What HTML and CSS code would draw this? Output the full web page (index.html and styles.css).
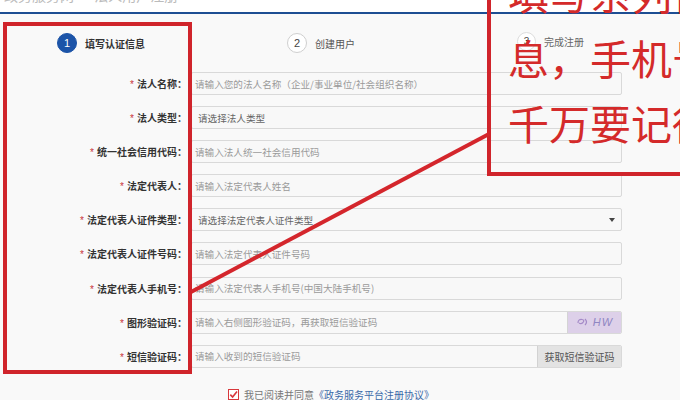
FILE: index.html
```html
<!DOCTYPE html>
<html lang="zh-CN">
<head>
<meta charset="utf-8">
<title>法人注册</title>
<link rel="stylesheet" href="styles.css">
</head>
<body>
<div class="page">
  <div class="topbar"><span class="title">政务服务网 · 法人用户注册</span></div>
  <div class="steps">
    <div class="step active"><span class="num">1</span><span class="txt">填写认证信息</span></div>
    <div class="step"><span class="num">2</span><span class="txt">创建用户</span></div>
    <div class="step last"><span class="num">3</span><span class="txt">完成注册</span></div>
  </div>
  <div class="form">
    <div class="lbl"><i>*</i>法人名称：</div>
    <div class="field"><span class="ph">请输入您的法人名称（企业/事业单位/社会组织名称）</span></div>
    <div class="lbl"><i>*</i>法人类型：</div>
    <div class="field select"><span class="ph">请选择法人类型</span></div>
    <div class="lbl"><i>*</i>统一社会信用代码：</div>
    <div class="field"><span class="ph">请输入法人统一社会信用代码</span></div>
    <div class="lbl"><i>*</i>法定代表人：</div>
    <div class="field"><span class="ph">请输入法定代表人姓名</span></div>
    <div class="lbl"><i>*</i>法定代表人证件类型：</div>
    <div class="field select"><span class="ph">请选择法定代表人证件类型</span><span class="arrow"></span></div>
    <div class="lbl"><i>*</i>法定代表人证件号码：</div>
    <div class="field"><span class="ph">请输入法定代表人证件号码</span></div>
    <div class="lbl"><i>*</i>法定代表人手机号：</div>
    <div class="field"><span class="ph">请输入法定代表人手机号(中国大陆手机号)</span></div>
    <div class="lbl"><i>*</i>图形验证码：</div>
    <div class="field addon"><span class="ph">请输入右侧图形验证码，再获取短信验证码</span>
      <span class="captcha"><svg width="14" height="10" viewBox="0 0 14 10"><path d="M2 6 Q2 2 6 2.5 Q9 3 7 5.5 Q5 7.5 3 6 M9 2 Q12 5 9 8" fill="none" stroke="#a58bc8" stroke-width="1.2"/></svg><b>HW</b></span>
    </div>
    <div class="lbl"><i>*</i>短信验证码：</div>
    <div class="field addon"><span class="ph">请输入收到的短信验证码</span><span class="smsbtn">获取短信验证码</span></div>
  </div>
  <div class="agree">
    <svg class="cb" width="11" height="11" viewBox="0 0 11 11"><rect x="0.5" y="0.5" width="10" height="10" fill="#fff" stroke="#d8383c"/><path d="M2.3 5.6 L4.6 8 L9 2.6" fill="none" stroke="#d8383c" stroke-width="1.6"/></svg>
    <span>我已阅读并同意</span><span class="link">《政务服务平台注册协议》</span>
  </div>

  <div class="mark-left"></div>
  <div class="mark-right">填写系列信<br>息，手机号<br>千万要记得</div>
  <svg class="mark-line" width="680" height="400" viewBox="0 0 680 400"><line x1="191" y1="292" x2="489" y2="134" stroke="#d4262c" stroke-width="4"/></svg>
</div>
</body>
</html>
```
FILE: styles.css
```css
html, body {
  margin: 0;
  padding: 0;
}
body {
  width: 680px;
  height: 400px;
  overflow: hidden;
  background: #f9f9f9;
  font-family: "Noto Sans CJK SC", "Noto Sans", sans-serif;
}
.page {
  position: relative;
  width: 680px;
  height: 400px;
  overflow: hidden;
}
.topbar {
  height: 12px;
  background: #fff;
  border-bottom: 2px solid #1d4e93;
  overflow: hidden;
}
.title {
  display: block;
  margin-top: -12px;
  padding-left: 4px;
  font-size: 14px;
  line-height: 14px;
  color: #bbb;
}
.steps {
  display: flex;
  align-items: center;
  height: 58px;
  padding-left: 57px;
  box-sizing: border-box;
}
.step {
  flex: 0 0 230px;
  display: flex;
  align-items: center;
  gap: 8px;
  font-size: 10px;
  color: #555;
}
.num {
  width: 20px;
  height: 20px;
  box-sizing: border-box;
  border-radius: 50%;
  border: 1px solid #cfcfcf;
  background: #fff;
  display: flex;
  align-items: center;
  justify-content: center;
  font-family: "Liberation Sans", sans-serif;
  font-size: 11px;
  color: #444;
}
.step.active .num {
  background: #1c54a8;
  border-color: #1c54a8;
  color: #fff;
}
.step.active .txt {
  font-weight: 700;
  color: #333;
}
.step.last {
  margin-top: -4px;
}
.step.last .num {
  width: 19px;
  height: 19px;
  border-color: #ddd;
  font-size: 10px;
}
.step.last .txt {
  color: #666;
}
.form {
  display: grid;
  grid-template-columns: 187px 431px;
  grid-auto-rows: 23px;
  column-gap: 4px;
  row-gap: 11.1px;
}
.lbl {
  display: flex;
  align-items: center;
  justify-content: flex-end;
  font-size: 10px;
  font-weight: 700;
  color: #333;
  white-space: nowrap;
}
.lbl i {
  font-style: normal;
  font-weight: 400;
  color: #c8323a;
  margin-right: 3px;
  font-family: "Liberation Sans", sans-serif;
  font-size: 10px;
  position: relative;
  top: 1px;
}
.field {
  height: 23px;
  box-sizing: border-box;
  border: 1px solid #d9d9d9;
  border-radius: 2px;
  background: #f8f8f8;
  display: flex;
  align-items: center;
  padding-left: 3px;
  font-size: 9.6px;
  color: #9a9a9a;
  overflow: hidden;
  white-space: nowrap;
}
.field.select {
  padding-left: 6px;
  color: #666;
}
.arrow {
  margin-left: auto;
  margin-right: 6px;
  width: 0;
  height: 0;
  border-left: 3px solid transparent;
  border-right: 3px solid transparent;
  border-top: 4px solid #444;
}
.field.addon {
  padding-right: 0;
}
.captcha {
  margin-left: auto;
  width: 53px;
  height: 100%;
  background: #ddd0e9;
  border-left: 1px solid #d4d4d4;
  display: flex;
  align-items: center;
  justify-content: center;
  gap: 3px;
}
.captcha b {
  font-family: "Liberation Sans", sans-serif;
  font-style: italic;
  font-weight: 400;
  font-size: 11px;
  color: #8f86c2;
  letter-spacing: 1px;
}
.smsbtn {
  margin-left: auto;
  width: 83px;
  height: 100%;
  background: #e3e3e3;
  border-left: 1px solid #d2d2d2;
  display: flex;
  align-items: center;
  justify-content: center;
  font-size: 10px;
  color: #555;
}
.agree {
  margin-top: 20px;
  padding-left: 228px;
  display: flex;
  align-items: center;
  gap: 5px;
  font-size: 10px;
  line-height: 14px;
  color: #777;
}
.agree .link {
  color: #3b69a8;
  margin-left: -5px;
}
.mark-left {
  position: absolute;
  left: 3px;
  top: 22px;
  width: 189px;
  height: 352px;
  box-sizing: border-box;
  border: 4px solid #d0242b;
}
.mark-right {
  position: absolute;
  left: 487px;
  top: -44px;
  width: 230px;
  border: 4px solid #d0242b;
  padding: 0 0 17px 17px;
  font-size: 41px;
  line-height: 65px;
  color: #d42a2a;
  white-space: nowrap;
}
.mark-line {
  position: absolute;
  left: 0;
  top: 0;
  pointer-events: none;
}
```
